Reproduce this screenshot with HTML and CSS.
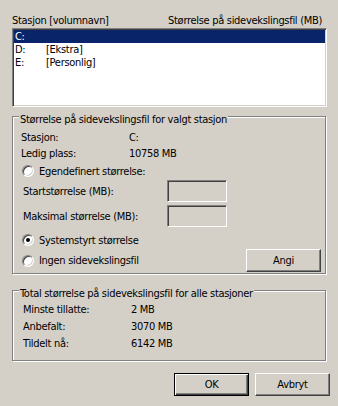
FILE: index.html
```html
<!DOCTYPE html>
<html lang="no">
<head>
<meta charset="UTF-8">
<meta name="viewport" content="width=device-width, initial-scale=1.0">
<title>Virtuelt minne</title>
<link rel="stylesheet" href="styles.css">
</head>
<body>

<div class="dialog">
    <div class="list-head">
        <span>Stasjon [volumnavn]</span>
        <span>Størrelse på sidevekslingsfil (MB)</span>
    </div>
    <div class="drive-list">
        <div class="drive selected"><span class="drive-letter">C:</span><span></span></div>
        <div class="drive"><span class="drive-letter">D:</span><span>[Ekstra]</span></div>
        <div class="drive"><span class="drive-letter">E:</span><span>[Personlig]</span></div>
    </div>

    <fieldset class="group group-drive">
        <legend>Størrelse på sidevekslingsfil for valgt stasjon</legend>
        <div class="info-row first"><span class="info-label">Stasjon:</span><span>C:</span></div>
        <div class="info-row"><span class="info-label">Ledig plass:</span><span>10758 MB</span></div>
        <label class="option option-custom"><span class="radio"></span>Egendefinert størrelse:</label>
        <div class="size-row size-start">
            <span class="size-label">Startstørrelse (MB):</span>
            <input type="text" class="size-box" disabled>
        </div>
        <div class="size-row size-max">
            <span class="size-label">Maksimal størrelse (MB):</span>
            <input type="text" class="size-box" disabled>
        </div>
        <label class="option option-system"><span class="radio checked"></span>Systemstyrt størrelse</label>
        <div class="option-last">
            <label class="option"><span class="radio"></span>Ingen sidevekslingsfil</label>
            <button class="btn">Angi</button>
        </div>
    </fieldset>

    <fieldset class="group group-total">
        <legend>Total størrelse på sidevekslingsfil for alle stasjoner</legend>
        <div class="total-row first"><span class="info-label">Minste tillatte:</span><span>2 MB</span></div>
        <div class="total-row"><span class="info-label">Anbefalt:</span><span>3070 MB</span></div>
        <div class="total-row"><span class="info-label">Tildelt nå:</span><span>6142 MB</span></div>
    </fieldset>

    <div class="actions">
        <button class="btn btn-default">OK</button>
        <button class="btn">Avbryt</button>
    </div>
</div>

</body>
</html>
```

FILE: styles.css
```css
body {
    margin: 0;
    background-color: #d4d0c8;
    font-family: "DejaVu Sans Condensed", "Liberation Sans", sans-serif;
    font-size: 11px;
    line-height: 13px;
    letter-spacing: -0.3px;
    color: #000000;
}

.dialog {
    width: 338px;
    height: 406px;
    box-sizing: border-box;
    padding: 14px 0 0 12px;
}

/* drive list */
.list-head {
    display: flex;
    justify-content: space-between;
    width: 315px;
    height: 13px;
    padding-right: 5px;
    box-sizing: border-box;
}

.drive-list {
    width: 315px;
    height: 79px;
    margin-top: 1px;
    box-sizing: border-box;
    background-color: #ffffff;
    border: 1px solid;
    border-color: #808080 #ffffff #ffffff #808080;
    box-shadow: inset 1px 1px 0 #404040, inset -1px -1px 0 #d4d0c8;
    padding: 1px;
}

.drive {
    display: flex;
    height: 13px;
    padding-left: 1px;
}

.drive.selected {
    background-color: #0a246a;
    color: #ffffff;
}

.drive-letter {
    width: 31px;
}

/* group boxes */
.group {
    width: 314px;
    margin: 0;
    box-sizing: border-box;
    border: 1px solid #808080;
    box-shadow: inset 1px 1px 0 #ffffff, 1px 1px 0 #ffffff;
    padding: 0 4px 1px 8px;
}

.group legend {
    padding: 6px 1px 0 1px;
    margin-left: -2px;
    background-color: #d4d0c8;
}

.group-total {
    margin-top: 7px;
    padding-bottom: 8px;
}

.info-row {
    display: flex;
    height: 16px;
    align-items: center;
}

.info-row.first {
    margin-top: 3px;
}

.info-label {
    width: 108px;
    flex: none;
}

.total-row {
    display: flex;
    height: 17px;
    align-items: center;
    padding-left: 2px;
}

.total-row.first {
    margin-top: 1px;
}

/* radios */
.option {
    display: flex;
    align-items: center;
    height: 16px;
    padding-left: 1px;
}

.option-custom {
    margin-top: 2px;
}

.option-system {
    margin-top: 5px;
}

.radio {
    width: 12px;
    height: 12px;
    margin-right: 5px;
    box-sizing: border-box;
    border-radius: 50%;
    border: 1px solid;
    border-color: #808080 #ffffff #ffffff #808080;
    box-shadow: inset 1px 1px 0 #404040, inset -1px -1px 0 #d4d0c8;
    background-color: #ffffff;
    display: flex;
    align-items: center;
    justify-content: center;
}

.radio.checked::after {
    content: "";
    width: 4px;
    height: 4px;
    border-radius: 50%;
    background-color: #000000;
}

/* size inputs */
.size-row {
    display: flex;
    align-items: center;
    height: 22px;
}

.size-start {
    margin-top: 1px;
}

.size-max {
    margin-top: 3px;
}

.size-label {
    width: 144px;
    padding-left: 2px;
    flex: none;
}

.size-box {
    width: 60px;
    height: 22px;
    margin: 0;
    padding: 0;
    box-sizing: border-box;
    background-color: #d4d0c8;
    border: 1px solid;
    border-color: #808080 #ffffff #ffffff #808080;
    box-shadow: inset 1px 1px 0 #404040, inset -1px -1px 0 #d4d0c8;
    outline: none;
}

.option-last {
    display: flex;
    justify-content: space-between;
    align-items: center;
    height: 23px;
    margin-top: 1px;
}

/* buttons */
.btn {
    width: 75px;
    height: 23px;
    margin: 0;
    padding: 0;
    box-sizing: border-box;
    font-family: inherit;
    font-size: 11px;
    letter-spacing: inherit;
    color: #000000;
    background-color: #d4d0c8;
    border: 1px solid;
    border-color: #ffffff #404040 #404040 #ffffff;
    box-shadow: inset -1px -1px 0 #808080, inset 1px 1px 0 #d4d0c8;
}

.btn-default {
    border-color: #000000;
    box-shadow: inset 1px 1px 0 #ffffff, inset -1px -1px 0 #404040, inset -2px -2px 0 #808080;
}

.actions {
    display: flex;
    justify-content: flex-end;
    gap: 6px;
    width: 318px;
    margin-top: 12px;
}
```
